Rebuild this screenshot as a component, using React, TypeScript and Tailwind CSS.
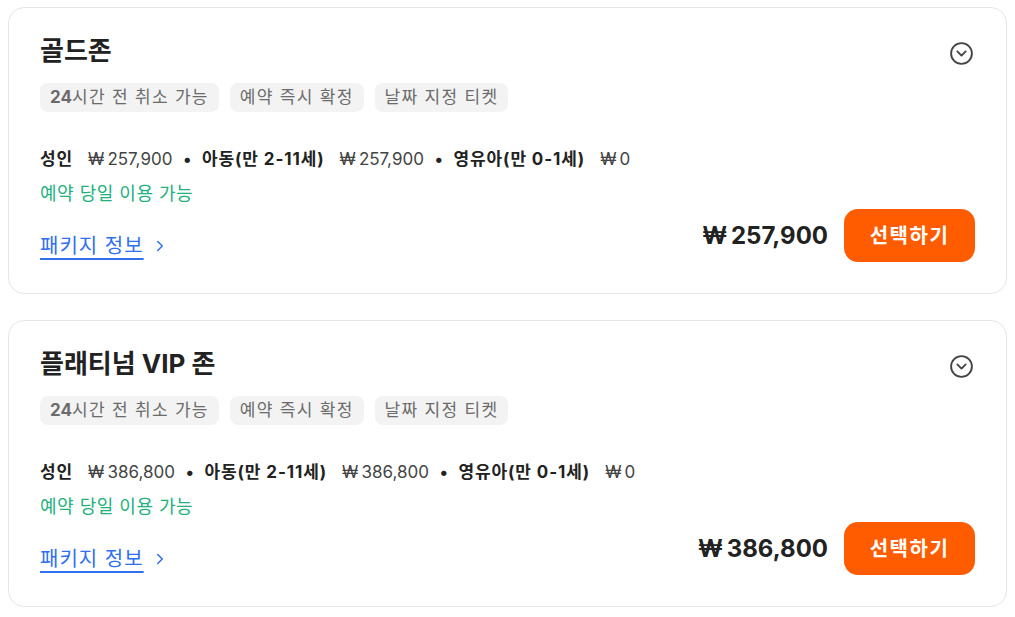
import { ChevronRight, CircleChevronDown } from "lucide-react";

type Zone = {
  name: string;
  price: string;
};

const zones: Zone[] = [
  { name: "골드존", price: "257,900" },
  { name: "플래티넘 VIP 존", price: "386,800" },
];

const Tag = ({ children }: { children: React.ReactNode }) => (
  <span className="rounded-[8px] bg-[#f3f3f3] px-[10px] py-[3px] text-[17px] leading-[23px] tracking-[1.3px] text-[#6b6b6b]">
    {children}
  </span>
);

const Fare = ({ label, price, last }: { label: string; price: string; last?: boolean }) => (
  <>
    <span className="font-bold tracking-[0.9px] text-[#222]">{label}</span>
    <span className="ml-[15px] text-[#444]">₩{"\u2009"}{price}</span>
    {!last && <span className="mx-[10px] text-[#222]">•</span>}
  </>
);

const ZoneCard = ({ zone }: { zone: Zone }) => {
  return (
    <div className="rounded-[16px] border border-[#e6e6e6] bg-white px-[31px] pb-[31px] pt-[26px]">
      <div className="flex items-center justify-between">
        <h2 className="text-[26px] font-bold leading-[34px] text-[#222]">{zone.name}</h2>
        <CircleChevronDown size={25} strokeWidth={1.8} className="mr-[1px] mt-[4px] text-[#444]" />
      </div>

      <div className="mt-[15px] flex gap-[11px]">
        <Tag>
          <span className="font-bold tracking-normal">24</span>시간 전 취소 가능
        </Tag>
        <Tag>예약 즉시 확정</Tag>
        <Tag>날짜 지정 티켓</Tag>
      </div>

      <div className="flex items-end justify-between">
        <div>
          <div className="mt-[35px] flex items-center text-[17px] leading-[24px]">
            <Fare label="성인" price={zone.price} />
            <Fare label="아동(만 2-11세)" price={zone.price} />
            <Fare label="영유아(만 0-1세)" price="0" last />
          </div>
          <p className="mt-[11px] text-[18px] leading-[24px] tracking-[0.5px] text-[#22b07d]">
            예약 당일 이용 가능
          </p>
          <a
            href="#"
            className="mt-[24px] flex items-center gap-[7px] text-[20px] leading-[32px] tracking-[1px] text-[#2f6ff0]"
          >
            <span className="underline decoration-[2px] underline-offset-[5px]">패키지 정보</span>
            <ChevronRight size={18} strokeWidth={2} />
          </a>
        </div>

        <div className="flex items-center gap-[16px]">
          <span className="text-[24px] font-bold text-[#222]">₩{"\u2009"}{zone.price}</span>
          <button className="h-[53px] w-[131px] rounded-[14px] bg-[#ff5c00] text-[20px] font-bold tracking-[1.5px] text-white">
            선택하기
          </button>
        </div>
      </div>
    </div>
  );
};

export default function App() {
  return (
    <div
      className="flex flex-col gap-[26px] bg-white px-[8px] pt-[7px]"
      style={{ fontFamily: 'Inter, "Noto Sans CJK KR", sans-serif' }}
    >
      {zones.map((z) => (
        <ZoneCard key={z.name} zone={z} />
      ))}
    </div>
  );
}
